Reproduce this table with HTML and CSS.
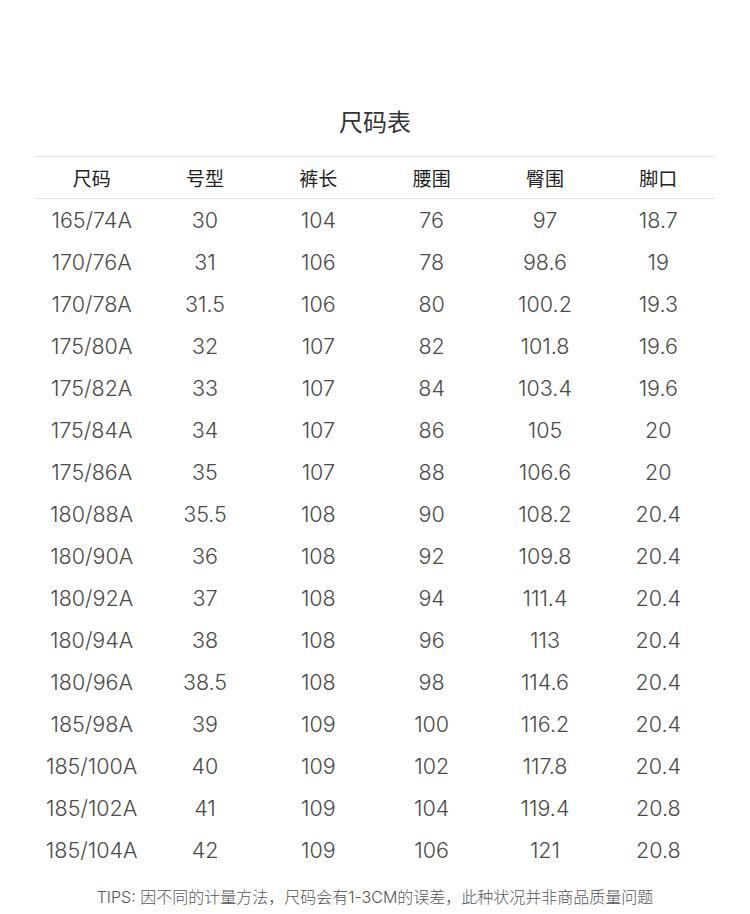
FILE: index.html
```html
<!DOCTYPE html>
<html lang="zh">
<head>
<meta charset="utf-8">
<link rel="stylesheet" href="styles.css">
</head>
<body>
<div class="page">
  <h1 class="title">尺码表</h1>
  <table class="size-table">
    <thead>
      <tr><th>尺码</th><th>号型</th><th>裤长</th><th>腰围</th><th>臀围</th><th>脚口</th></tr>
    </thead>
    <tbody>
      <tr><td>165/74A</td><td>30</td><td>104</td><td>76</td><td>97</td><td>18.7</td></tr>
      <tr><td>170/76A</td><td>31</td><td>106</td><td>78</td><td>98.6</td><td>19</td></tr>
      <tr><td>170/78A</td><td>31.5</td><td>106</td><td>80</td><td>100.2</td><td>19.3</td></tr>
      <tr><td>175/80A</td><td>32</td><td>107</td><td>82</td><td>101.8</td><td>19.6</td></tr>
      <tr><td>175/82A</td><td>33</td><td>107</td><td>84</td><td>103.4</td><td>19.6</td></tr>
      <tr><td>175/84A</td><td>34</td><td>107</td><td>86</td><td>105</td><td>20</td></tr>
      <tr><td>175/86A</td><td>35</td><td>107</td><td>88</td><td>106.6</td><td>20</td></tr>
      <tr><td>180/88A</td><td>35.5</td><td>108</td><td>90</td><td>108.2</td><td>20.4</td></tr>
      <tr><td>180/90A</td><td>36</td><td>108</td><td>92</td><td>109.8</td><td>20.4</td></tr>
      <tr><td>180/92A</td><td>37</td><td>108</td><td>94</td><td>111.4</td><td>20.4</td></tr>
      <tr><td>180/94A</td><td>38</td><td>108</td><td>96</td><td>113</td><td>20.4</td></tr>
      <tr><td>180/96A</td><td>38.5</td><td>108</td><td>98</td><td>114.6</td><td>20.4</td></tr>
      <tr><td>185/98A</td><td>39</td><td>109</td><td>100</td><td>116.2</td><td>20.4</td></tr>
      <tr><td>185/100A</td><td>40</td><td>109</td><td>102</td><td>117.8</td><td>20.4</td></tr>
      <tr><td>185/102A</td><td>41</td><td>109</td><td>104</td><td>119.4</td><td>20.8</td></tr>
      <tr><td>185/104A</td><td>42</td><td>109</td><td>106</td><td>121</td><td>20.8</td></tr>
    </tbody>
  </table>
  <p class="tips">TIPS: 因不同的计量方法，尺码会有1-3CM的误差，此种状况并非商品质量问题</p>
</div>
</body>
</html>
```

FILE: styles.css
```css
html, body {
  margin: 0;
  padding: 0;
  background: #fff;
}
.page {
  width: 750px;
  height: 914px;
  padding: 104px 35px 0;
  box-sizing: border-box;
  font-family: "Inter", "Noto Sans CJK SC", sans-serif;
}
.title {
  margin: 0;
  height: 52px;
  font-size: 24px;
  font-weight: 400;
  line-height: 34px;
  text-align: center;
  color: #333;
  font-family: "Noto Sans CJK SC", sans-serif;
}
.size-table {
  width: 680px;
  border-collapse: collapse;
  table-layout: fixed;
}
.size-table th {
  height: 41px;
  padding: 0;
  font-size: 19px;
  font-weight: 400;
  color: #222;
  text-align: center;
  border-top: 1px solid #e6e6e6;
  border-bottom: 1px solid #e6e6e6;
  font-family: "Noto Sans CJK SC", sans-serif;
}
.size-table td {
  height: 42px;
  padding: 0;
  font-size: 21.5px;
  font-weight: 300;
  color: #4a4a4a;
  text-align: center;
  font-family: "Inter", sans-serif;
}
.tips {
  margin: 13px 0 0;
  font-size: 16px;
  font-weight: 300;
  color: #555;
  text-align: center;
  font-family: "Inter", "Noto Sans CJK SC", sans-serif;
}
```
